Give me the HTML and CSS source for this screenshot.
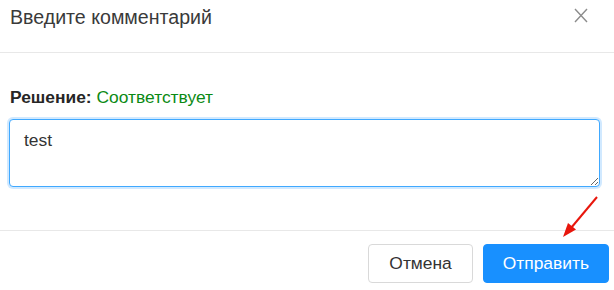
FILE: index.html
```html
<!DOCTYPE html>
<html lang="ru">
<head>
  <meta charset="UTF-8" />
  <title>Введите комментарий</title>
  <link rel="stylesheet" href="styles.css">
</head>
<body>
  <div class="modal">
    <div class="modal-header">
      <div class="modal-title">Введите комментарий</div>
      <button class="modal-close" aria-label="Закрыть">
        <svg width="14" height="15" viewBox="0 0 14 15">
          <path d="M1 1 L13 14 M13 1 L1 14" stroke="#8c8c8c" stroke-width="1.4" fill="none"/>
        </svg>
      </button>
    </div>

    <div class="modal-body">
      <div class="decision">
        <b>Решение:</b> <span class="decision-value">Соответствует</span>
      </div>
      <textarea class="comment">test</textarea>
    </div>

    <div class="modal-footer">
      <button class="btn">Отмена</button>
      <button class="btn btn-primary">Отправить</button>
    </div>

    <!-- стрелка-подсказка поверх окна -->
    <svg class="hint-arrow" width="50" height="60" viewBox="0 0 50 60">
      <line x1="44" y1="7" x2="18" y2="38" stroke="#e8160c" stroke-width="2"/>
      <polygon points="10,47 23,39.5 15,33" fill="#e8160c"/>
    </svg>
  </div>
</body>
</html>
```

FILE: styles.css
```css
/* ======= Общие стили ======= */
body {
  margin: 0;
  font-family: "Liberation Sans", Arial, sans-serif;
  background: #fff;
  color: #333;
}
.modal {
  position: relative;
  width: 614px;
  height: 290px;
  background: #fff;
}

/* ======= Шапка ======= */
.modal-header {
  display: flex;
  justify-content: space-between;
  align-items: flex-start;
  height: 53px;
  padding: 0 26px 0 10px;
  border-bottom: 1px solid #e8e8e8;
  box-sizing: border-box;
}
.modal-title {
  font-size: 19.6px;
  line-height: 34px;
  color: #3a3a3a;
}
.modal-close {
  background: none;
  border: none;
  padding: 0;
  margin-top: 8px;
  cursor: pointer;
}

/* ======= Тело ======= */
.modal-body {
  padding: 34px 14px 43px 9px;
}
.decision {
  font-size: 17.4px;
  line-height: 20px;
  padding-left: 1px;
  margin-bottom: 12px;
}
.decision b {
  color: #262626;
}
.decision-value {
  color: #0b8a14;
}
.comment {
  display: block;
  width: 100%;
  height: 68px;
  box-sizing: border-box;
  padding: 10px 14px;
  font-family: "Liberation Sans", Arial, sans-serif;
  font-size: 17.4px;
  color: #333;
  border: 1px solid #40a9ff;
  border-radius: 4px;
  box-shadow: 0 0 0 2px rgba(24, 144, 255, 0.2);
  outline: none;
  resize: vertical;
}

/* ======= Подвал ======= */
.modal-footer {
  display: flex;
  justify-content: flex-end;
  gap: 10px;
  padding: 13px 5px 0 0;
  border-top: 1px solid #e8e8e8;
}
.btn {
  height: 39px;
  padding: 0 20px;
  font-family: "Liberation Sans", Arial, sans-serif;
  font-size: 17.4px;
  color: #333;
  background: #fff;
  border: 1px solid #d9d9d9;
  border-radius: 4px;
  cursor: pointer;
}
.btn-primary {
  padding: 0 19px;
  color: #fff;
  background: #1890ff;
  border-color: #1890ff;
}

.hint-arrow {
  position: absolute;
  left: 553px;
  top: 190px;
}
```
